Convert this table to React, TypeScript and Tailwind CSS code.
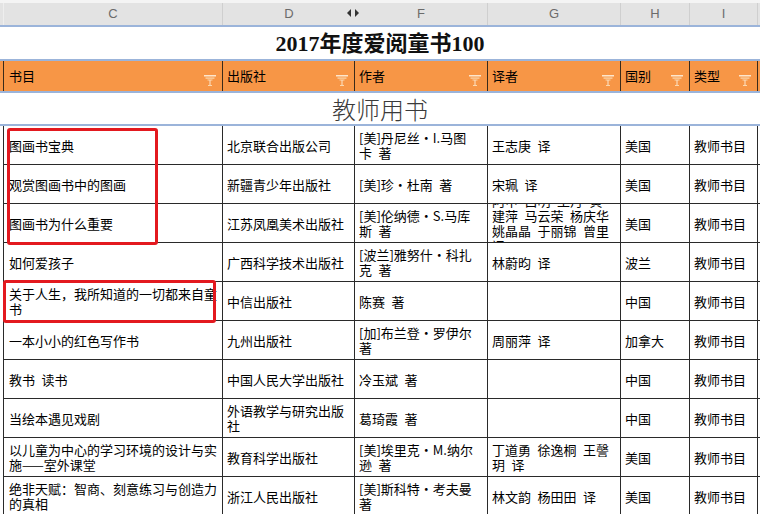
import React from "react";

const FONT = { fontFamily: '"Noto Sans CJK SC", "Liberation Sans", sans-serif' };

const COLS = ["w-[220px] border-l pl-[5px]", "w-[132px] pl-[4px]", "w-[133px] pl-[4px]", "w-[133px] pl-[4px]", "w-[69px] pl-[4px]", "w-[68px] pl-[4px]"];

const LETTERS = ["C", "D", "F", "G", "H", "I"];

const HEADERS = ["书目", "出版社", "作者", "译者", "国别", "类型"];

const ROWS: string[][] = [
  ["图画书宝典", "北京联合出版公司", "[美]丹尼丝·I.马图\n卡 著", "王志庚 译", "美国", "教师书目"],
  ["观赏图画书中的图画", "新疆青少年出版社", "[美]珍·杜南 著", "宋珮 译", "美国", "教师书目"],
  [
    "图画书为什么重要",
    "江苏凤凰美术出版社",
    "[美]伦纳德·S.马库\n斯 著",
    "阿甲 吕明 王丹 黄\n建萍 马云荣 杨庆华\n姚晶晶 于丽锦 曾里\n译",
    "美国",
    "教师书目",
  ],
  ["如何爱孩子", "广西科学技术出版社", "[波兰]雅努什·科扎\n克 著", "林蔚昀 译", "波兰", "教师书目"],
  ["关于人生，我所知道的一切都来自童\n书", "中信出版社", "陈赛 著", "", "中国", "教师书目"],
  ["一本小小的红色写作书", "九州出版社", "[加]布兰登·罗伊尔\n著", "周丽萍 译", "加拿大", "教师书目"],
  ["教书 读书", "中国人民大学出版社", "冷玉斌 著", "", "中国", "教师书目"],
  ["当绘本遇见戏剧", "外语教学与研究出版\n社", "葛琦霞 著", "", "中国", "教师书目"],
  [
    "以儿童为中心的学习环境的设计与实\n施——室外课堂",
    "教育科学出版社",
    "[美]埃里克·M.纳尔\n逊 著",
    "丁道勇 徐逸桐 王謦\n玥 译",
    "美国",
    "教师书目",
  ],
  ["绝非天赋：智商、刻意练习与创造力\n的真相", "浙江人民出版社", "[美]斯科特·考夫曼\n著", "林文韵 杨田田 译", "美国", "教师书目"],
];

// the sheet's spaces are wider than Noto's
const wide = (s: string) => s.replace(/ /g, "\u2002");

const FilterIcon = () => (
  <svg width="12" height="13" viewBox="0 0 12 13">
    <rect x="0" y="1" width="12" height="1.5" fill="#fde6cc" />
    <rect x="1.5" y="3.5" width="9" height="1.2" fill="#fbd8ad" />
    <rect x="3.5" y="5.5" width="5" height="1" fill="#fbd8ad" />
    <rect x="5.5" y="6" width="1" height="5" fill="#fde6cc" />
    <rect x="4" y="11" width="4" height="1" fill="#fbd8ad" />
  </svg>
);

const BlueLine = () => <div className="h-[2px] bg-[#9bb4da]" />;

export default function App() {
  return (
    <div className="relative w-[760px] h-[514px] overflow-hidden bg-white text-black" style={FONT}>
      {/* column letters */}
      <div className="h-[3px] bg-[#f4f4f4]" />
      <div className="flex h-[22px] bg-[#e3e3e3] pl-[3px]">
        {LETTERS.map((l, i) => (
          <div
            key={l}
            className={`${COLS[i].split(" ")[0]} relative flex items-center justify-center text-[13px] text-[#6b6b6b] ${
              i === 1 ? "" : "border-r border-[#cfcfcf]"
            } ${i === 0 ? "border-l border-l-[#eeeeee]" : ""}`}
            style={{ fontFamily: '"Liberation Sans", sans-serif' }}
          >
            {l}
            {i === 1 && (
              <svg className="absolute right-[-4px] top-[5px]" width="12" height="10" viewBox="0 0 12 10">
                <polygon points="4,1 0,5 4,9" fill="#333" />
                <polygon points="8,1 12,5 8,9" fill="#333" />
              </svg>
            )}
          </div>
        ))}
      </div>
      <BlueLine />

      {/* title */}
      <div
        className="h-[32px] flex items-center justify-center text-[22px] font-bold text-[#111]"
        style={{ fontFamily: '"Liberation Serif", "Noto Sans CJK SC", serif' }}
      >
        2017年度爱阅童书100
      </div>
      <BlueLine />

      {/* header */}
      <div className="flex h-[30px] bg-[#f79646] pl-[3px]">
        {HEADERS.map((h, i) => (
          <div key={h} className={`${COLS[i]} flex items-center justify-between border-r border-[#3a2a1a] pr-[6px] text-[13px]`}>
            <span>{h}</span>
            <span className="self-end pb-[4px]">
              <FilterIcon />
            </span>
          </div>
        ))}
      </div>
      <BlueLine />

      {/* section */}
      <div className="h-[31px] flex items-center justify-center text-[24px] text-[#3a3a3a] font-light">教师用书</div>
      <BlueLine />

      {/* rows */}
      <div className="pl-[3px]">
        {ROWS.map((row, r) => (
          <div key={r} className="flex h-[39px] border-b border-[#2a2a2a]">
            {row.map((cell, i) => (
              <div
                key={i}
                className={`${COLS[i]} flex items-center overflow-hidden border-r border-[#2a2a2a] text-[13px] leading-[15px] whitespace-pre`}
              >
                <span>{wide(cell)}</span>
              </div>
            ))}
          </div>
        ))}
      </div>

      {/* red highlight boxes */}
      <div className="absolute left-[7px] top-[128px] w-[151px] h-[117px] border-[3px] border-[#e3191f] rounded-[3px]" />
      <div className="absolute left-[3px] top-[280px] w-[213px] h-[43px] border-[3px] border-[#e3191f] rounded-[3px]" />
    </div>
  );
}
